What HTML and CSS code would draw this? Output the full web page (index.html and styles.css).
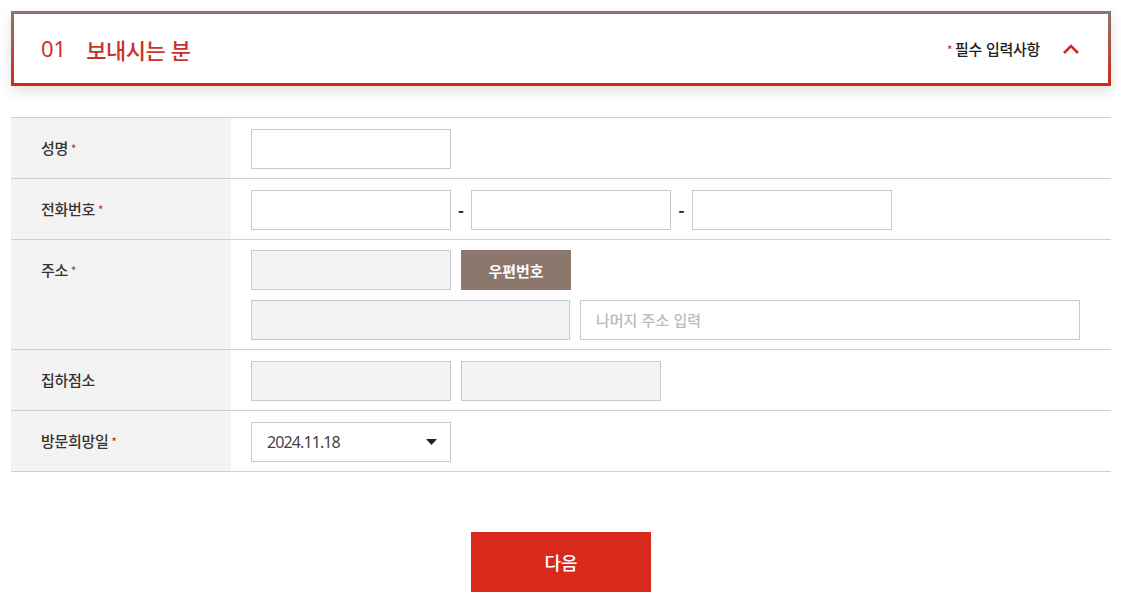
FILE: index.html
```html
<!DOCTYPE html>
<html lang="ko">
<head>
<meta charset="utf-8">
<link rel="stylesheet" href="styles.css">
</head>
<body>
<div class="page">
  <div class="sec-head">
    <h2 class="sec-title"><span class="num">01</span><span>보내시는 분</span></h2>
    <div class="sec-right">
      <span class="req"><i class="star">*</i>필수 입력사항</span>
      <svg class="chev" width="18" height="12" viewBox="0 0 18 12"><path d="M2 10 L9 3 L16 10" fill="none" stroke="#d0291d" stroke-width="2.6"/></svg>
    </div>
  </div>

  <div class="form">
    <div class="row">
      <div class="label">성명<i class="star">*</i></div>
      <div class="field">
        <div class="line"><span class="inp"></span></div>
      </div>
    </div>
    <div class="row">
      <div class="label">전화번호<i class="star">*</i></div>
      <div class="field">
        <div class="line"><span class="inp"></span><span class="dash">-</span><span class="inp"></span><span class="dash">-</span><span class="inp"></span></div>
      </div>
    </div>
    <div class="row">
      <div class="label">주소<i class="star">*</i></div>
      <div class="field field-addr">
        <div class="line gap"><span class="inp dis"></span><span class="btn-zip">우편번호</span></div>
        <div class="line gap"><span class="inp dis wide"></span><span class="inp wider ph">나머지 주소 입력</span></div>
      </div>
    </div>
    <div class="row">
      <div class="label">집하점소</div>
      <div class="field">
        <div class="line gap"><span class="inp dis"></span><span class="inp dis"></span></div>
      </div>
    </div>
    <div class="row">
      <div class="label">방문희망일<i class="star">*</i></div>
      <div class="field">
        <div class="line"><span class="inp sel">2024.11.18<svg class="caret" width="11" height="6" viewBox="0 0 11 6"><path d="M0 0 H11 L5.5 6 Z" fill="#222"/></svg></span></div>
      </div>
    </div>
  </div>

  <div class="actions"><span class="btn-next">다음</span></div>
</div>
</body>
</html>
```

FILE: styles.css
```css
* { box-sizing: border-box; }
html, body { margin: 0; padding: 0; background: #fff; }
body { font-family: "Noto Sans CJK KR", "Noto Sans", sans-serif; color: #333; }
.page { padding: 11px 10px 0 11px; width: 1121px; }

.sec-head {
  height: 75px;
  border: 3px solid;
  border-image: linear-gradient(#8b776c, #d2291c) 1;
  box-shadow: 0 5px 12px rgba(0,0,0,0.13);
  display: flex;
  align-items: center;
  justify-content: space-between;
  padding: 0 28px 0 27px;
  background: #fff;
}
.sec-title { margin: 0; font-size: 22px; font-weight: 500; color: #c8332a; display: flex; gap: 20px; letter-spacing: -0.5px; }
.sec-title .num { font-family: "Noto Sans", sans-serif; font-weight: 400; letter-spacing: 0; }
.sec-right { display: flex; align-items: center; gap: 22px; }
.req { font-size: 15px; color: #222; letter-spacing: -0.3px; font-weight: 500; }
.star { font-style: normal; color: #d0291d; font-size: 11px; margin: 0 3px; display: inline-block; line-height: 0; vertical-align: 1px; }
.req .star { margin: 0 3px 0 0; }
.chev { display: block; }

.form { margin-top: 31px; border-top: 1px solid #cfcfcf; }
.row { display: flex; border-bottom: 1px solid #cfcfcf; }
.label {
  width: 220px; background: #f3f3f3; padding: 10px 0 10px 30px;
  font-size: 15px; line-height: 40px; color: #333; font-weight: 500; letter-spacing: -0.3px;
}
.field { flex: 1; padding: 11px 20px 9px; display: flex; flex-direction: column; gap: 10px; }
.field-addr { padding-top: 10px; }
.line { display: flex; align-items: center; height: 40px; }
.line.gap { gap: 10px; }
.inp { display: block; width: 200px; height: 40px; border: 1px solid #c9c9c9; background: #fff; }
.inp.dis { background: #f3f3f3; }
.inp.wide { width: 319px; }
.inp.wider { width: 500px; }
.ph { color: #bbb; font-size: 15px; line-height: 38px; padding-left: 15px; font-weight: 500; }
.dash { width: 20px; text-align: center; font-size: 17px; font-weight: 700; color: #222; line-height: 1; }
.line .dash + .inp + .dash { width: 21px; }
.btn-zip { width: 110px; height: 40px; background: #8b776b; color: #fff; font-size: 15px; font-weight: 700; display: flex; align-items: center; justify-content: center; }
.sel { display: flex; align-items: center; justify-content: space-between; padding: 0 13px 0 15px; font-family: "Noto Sans", sans-serif; font-size: 16px; color: #444; letter-spacing: -0.9px; }

.actions { display: flex; justify-content: center; margin-top: 60px; }
.btn-next { width: 180px; height: 60px; background: #d9291c; color: #fff; font-size: 18px; font-weight: 500; display: flex; align-items: center; justify-content: center; }
```
